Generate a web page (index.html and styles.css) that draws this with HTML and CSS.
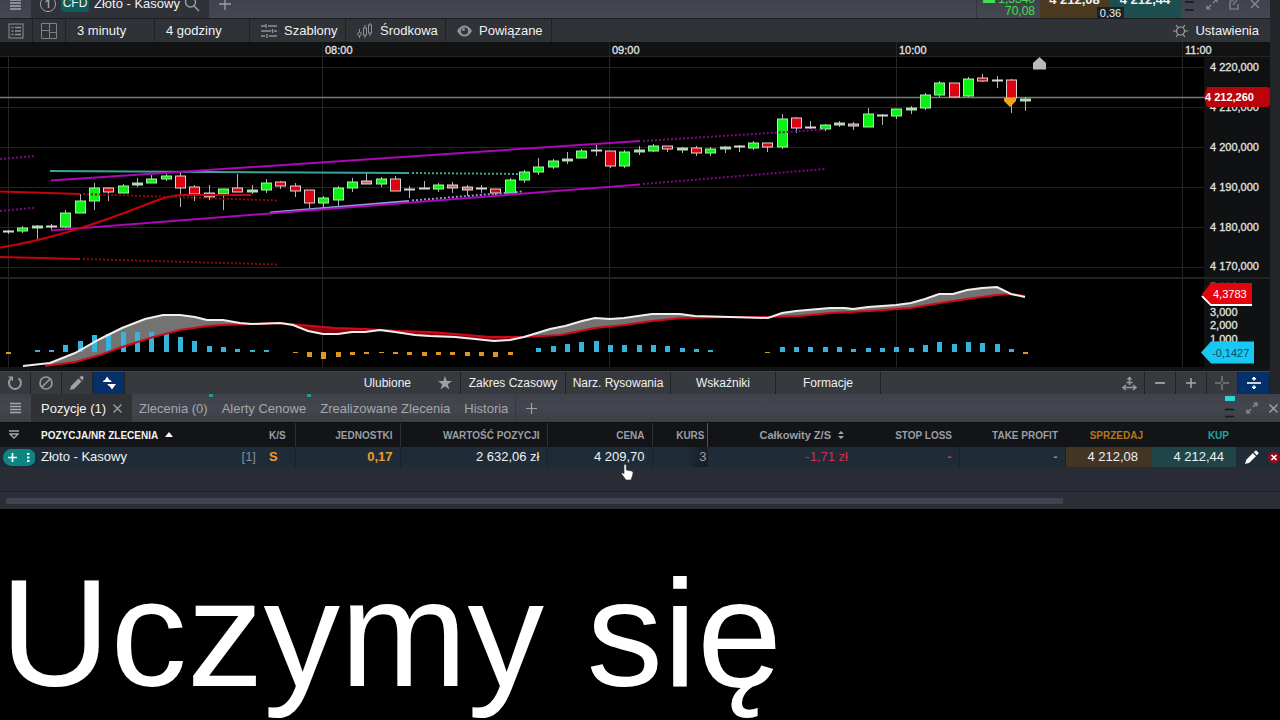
FILE: index.html
```html
<!DOCTYPE html>
<html lang="pl">
<head>
<meta charset="utf-8">
<title>Złoto - Kasowy</title>
<link rel="stylesheet" href="styles.css">
</head>
<body>
<section class="window">
  <div class="titleclip">
    <header class="titlebar">
      <button class="icon-btn menu" aria-label="Menu"><svg width="12" height="12" viewBox="0 0 12 12"><path d="M0 2h11M0 5h11M0 8h11M0 11h11" stroke="#a5a8ac" stroke-width="1.4"/></svg></button>
      <div class="title-tab">
        <svg width="18" height="18" viewBox="0 0 18 18" fill="none" stroke="#9c9fa4"><circle cx="9" cy="9" r="7.6"/><path d="M6.5 7L9.500 4.500V13" stroke-width="1.5"/></svg>
        <span class="cfd">CFD</span>
        <span class="instrument">Złoto - Kasowy</span>
        <button class="plain" aria-label="Szukaj"><svg width="16" height="16" viewBox="0 0 16 16" fill="none" stroke="#9c9fa4" stroke-width="1.4"><circle cx="6.500" cy="6" r="5"/><path d="M10 10l5 5"/></svg></button>
      </div>
      <button class="icon-btn" aria-label="Dodaj"><svg width="12" height="12" viewBox="0 0 12 12"><path d="M6 0v12M0 6h12" stroke="#9c9fa4" stroke-width="1.3"/></svg></button>
      <div class="quote">
        <div class="change"><span>▬ 1,3340</span><span>70,08</span></div>
        <button class="price sell">4 212,08</button>
        <button class="price buy">4 212,44</button>
        <span class="spread">0,36</span>
      </div>
      <div class="win-icons">
        <svg width="10" height="14" viewBox="0 0 10 14"><path d="M0 5h9M0 13h9" stroke="#15171a" stroke-width="1.300"/></svg>
        <button class="plain" aria-label="Powiększ"><svg width="12" height="12" viewBox="0 0 12 12" fill="none" stroke="#8b8e94" stroke-width="1.2"><path d="M7 5l4-4M7.500 1H11v3.500M5 7l-4 4M1 7.500V11h3.500"/></svg></button>
        <button class="plain" aria-label="Odepnij"><svg width="10" height="12" viewBox="0 0 10 12" fill="none" stroke="#8b8e94" stroke-width="1.2"><path d="M5 3H1v8h8V6M4 7l4-5"/></svg></button>
        <button class="plain" aria-label="Zamknij"><svg width="10" height="10" viewBox="0 0 10 10" stroke="#8b8e94" stroke-width="1.3"><path d="M1 1l8 8M9 1L1 9"/></svg></button>
      </div>
    </header>
  </div>
  <nav class="toolbar">
    <button class="sq" aria-label="Lista"><svg width="16" height="16" viewBox="0 0 16 16" fill="none" stroke="#8e9196"><rect x="1" y="1" width="14" height="14"/><path d="M3.500 4.500h2M7 4.500h6M3.500 8h2M7 8h6M3.500 11.500h2M7 11.500h6" stroke-width="1.3"/></svg></button>
    <button class="sq" aria-label="Układ"><svg width="18" height="16" viewBox="0 0 18 16" fill="none" stroke="#7e8186"><path d="M1.500 .5h15v15h-15zM9.500 .5v15M1.500 7.500h8M9.500 9.500h7"/></svg></button>
    <button class="w88">3 minuty</button>
    <button class="w94">4 godziny</button>
    <button class="w97"><svg width="16" height="14" viewBox="0 0 16 14" stroke="#8e9196" stroke-width="1.4"><path d="M0 2h4M7 2h9M0 7h10M13 7h3M0 12h4M8 12h8M5 0v4M11.500 5v4M6 10v4"/></svg>Szablony</button>
    <button class="w100"><svg width="16" height="15" viewBox="0 0 16 15" fill="none" stroke="#8e9196"><circle cx="2.500" cy="11" r="1.800"/><path d="M2.500 6v3M2.500 13v2M8 2v3M8 12v3M13 0v2M13 10v3"/><rect x="6.500" y="5" width="3" height="7"/><rect x="11.500" y="2" width="3" height="8"/></svg>Środkowa</button>
    <button class="w106"><svg width="15" height="12" viewBox="0 0 15 12"><path d="M0 6Q3 .5 7.500 .5T15 6Q12 11.500 7.500 11.500T0 6z" fill="#8e9196"/><circle cx="7.500" cy="6" r="3.500" fill="#2f3237"/><circle cx="6.500" cy="4.500" r="1.500" fill="#8e9196"/></svg>Powiązane</button>
    <button class="settings"><svg width="15" height="14" viewBox="0 0 15 14" fill="none" stroke="#a2a5a9" stroke-width="1.2"><circle cx="7.500" cy="7" r="4"/><path d="M0 7h3.500M11.500 7H15M3 1l2 2.500M12 1l-2 2.500M3 13l2-2.500M12 13l-2-2.500"/></svg>Ustawienia</button>
  </nav>
  <svg class="chart" viewBox="0 42 1270 329" role="img" aria-label="Wykres Złoto - Kasowy">
    <rect y="42" width="1270" height="329" fill="#000"/>
    <rect y="42" width="1270" height="15" fill="#111213"/>
    <rect x="1204" y="57" width="66" height="314" fill="#101112"/>
    <rect y="367" width="1270" height="4" fill="#121416"/>
    <path class="grid" d="M0 67.500H1204M0 107.500H1204M0 147.500H1204M0 187.500H1204M0 227.500H1204M0 267.500H1204M8.500 57V367M322.500 42V367M609.500 42V367M896.500 42V367M1182.500 42V367M0 56.500H1270"/>
    <path d="M0 278H1270" stroke="#222" stroke-width="2"/>
    <g class="axis">
      <text x="325" y="54">08:00</text><text x="612" y="54">09:00</text><text x="899" y="54">10:00</text><text x="1185" y="54">11:00</text>
      <text x="1210" y="71">4 220,000</text><text x="1210" y="111">4 210,000</text><text x="1210" y="151">4 200,000</text><text x="1210" y="191">4 190,000</text><text x="1210" y="231">4 180,000</text><text x="1210" y="270">4 170,000</text>
      <text x="1210" y="291">5,000</text><text x="1210" y="316">3,000</text><text x="1210" y="329">2,000</text><text x="1210" y="343">1,000</text>
    </g>
    <path d="M0 97.500H1204" stroke="#77797b" stroke-width="1.500"/>
    <g id="candles"></g>
    <g class="trend">
      <path class="teal" d="M50 171L409 173"/><path class="teal dot" d="M412 173L523 174"/>
      <path class="blue" d="M270 212.500L409 201"/><path class="blue dot" d="M412 200.500L523 191.500"/>
      <path class="violet" d="M51 180.500L640 141M51 230.500L640 184.500"/>
      <path class="violet2 dot" d="M643 141L825 129.500M643 184L825 169M0 159L36 156M0 211L36 207.500"/>
      <path class="red" d="M0 191.500L80 194M0 257L80 259M0 247.500C50 240 100 223 150 203Q170 195 182 195H251"/>
      <path class="red2 dot" d="M83 194L278 200.500M83 259L278 264.500"/>
    </g>
    <path d="M1004 98h12v3l-6 6l-6-6z" fill="#f0a51c"/>
    <path d="M1039.500 57l6.500 6v6.500h-13V63z" fill="#b9b9b9"/>
    <g id="macd"></g>
    <path d="M1204 97l3-10h60q3 0 3 3v14q0 3-3 3h-60z" fill="#b9040c"/>
    <text class="tag" x="1205" y="101">4 212,260</text>
    <path d="M1202 296l9 9h41" fill="none" stroke="#fff" stroke-width="2"/>
    <path d="M1202 294l9-11h41v21h-41z" fill="#e4040c"/>
    <text class="tag light" x="1213" y="298">4,3783</text>
    <path d="M1201 352.500l10-11h43v22h-43z" fill="#17c8f3"/>
    <text class="tag dark" x="1212" y="357">-0,1427</text>
  </svg>
  <nav class="bottombar">
    <button class="sq" aria-label="Odśwież"><svg width="16" height="16" viewBox="0 0 16 16" fill="none" stroke="#96999c" stroke-width="2"><path d="M11.500 3.200A6 6 0 1 1 3.500 4"/><path d="M1 1.500h5v5z" fill="#96999c" stroke="none"/></svg></button>
    <button class="sq" aria-label="Wyczyść"><svg width="16" height="16" viewBox="0 0 16 16" fill="none" stroke="#96999c" stroke-width="1.700"><circle cx="8" cy="8" r="6"/><path d="M4 12l8-8"/></svg></button>
    <button class="sq" aria-label="Rysuj"><svg width="16" height="16" viewBox="0 0 16 16" fill="#a0a3a6"><path d="M1 15l1-4l7.500-7.500l3 3L5 14zM10.500 2.500l1.500-1.500q1-.5 2 .5t.5 2L13.500 5.500z"/></svg></button>
    <button class="sq active" aria-label="Zmień kolejność"><svg width="16" height="16" viewBox="0 0 16 16" fill="#fff"><path d="M2 7q0-2 2-2l2-3.500L8.500 5q2 0 2 2zM6.500 9H15l-1.500 2l-2.500 3.500L8.500 11q-2 0-2-2z"/></svg></button>
    <button class="fav"><span>Ulubione</span><svg width="14" height="14" viewBox="0 0 14 14" fill="#9fa2a5"><path d="M7 0l1.700 5H14L9.800 8.200L11.400 13.500L7 10.200L2.600 13.500L4.200 8.200L0 5h5.300z"/></svg></button>
    <button class="w105">Zakres Czasowy</button>
    <button class="w105">Narz. Rysowania</button>
    <button class="w105">Wskaźniki</button>
    <button class="w105">Formacje</button>
    <button class="sq push" aria-label="Dopasuj"><svg width="15" height="15" viewBox="0 0 15 15" fill="none" stroke="#96999c" stroke-width="1.500"><path d="M7.500 2v7M4.500 6.500h6M1 11.500h13M4 9l-3 2.500l3 2.500M11 9l3 2.500l-3 2.500M5.500 3.500l2-2l2 2"/></svg></button>
    <button class="sq" aria-label="Pomniejsz"><svg width="12" height="12" viewBox="0 0 12 12" stroke="#a5a8aa" stroke-width="1.700"><path d="M1 6h10"/></svg></button>
    <button class="sq" aria-label="Powiększ"><svg width="12" height="12" viewBox="0 0 12 12" stroke="#a5a8aa" stroke-width="1.500"><path d="M1 6h10M6 1v10"/></svg></button>
    <button class="sq" aria-label="Celownik"><svg width="14" height="14" viewBox="0 0 14 14" stroke="#96999c"><path d="M0 7h6M8 7h6M7 0v6M7 8v6"/></svg></button>
    <button class="sq active" aria-label="Skala"><svg width="14" height="14" viewBox="0 0 14 14" fill="#fff" stroke="#fff"><path d="M0 7h14" stroke-width="1.600"/><path d="M7 1v4M7 9v4"/><path d="M5 3l2-2l2 2zM5 11l2 2l2-2z"/></svg></button>
  </nav>
</section>

<section class="positions">
  <nav class="tabs">
    <button class="icon-btn" aria-label="Menu"><svg width="12" height="12" viewBox="0 0 12 12"><path d="M0 1.500h11M0 4.500h11M0 7.500h11M0 10.500h11" stroke="#a5a8ac" stroke-width="1.300"/></svg></button>
    <button class="tab on">Pozycje (1)<svg width="9" height="9" viewBox="0 0 9 9" stroke="#a0a3a7" stroke-width="1.200"><path d="M.5 .5l8 8M8.500 .5l-8 8"/></svg></button>
    <button class="tab note">Zlecenia (0)</button>
    <button class="tab note">Alerty Cenowe</button>
    <button class="tab">Zrealizowane Zlecenia</button>
    <button class="tab">Historia</button>
    <button class="icon-btn add" aria-label="Dodaj"><svg width="11" height="11" viewBox="0 0 11 11"><path d="M5.500 0v11M0 5.500h11" stroke="#9c9fa4" stroke-width="1.200"/></svg></button>
    <div class="tab-icons">
      <svg width="10" height="24" viewBox="0 0 10 24"><path d="M0 0h10v5H0z" fill="#2fd3d8"/><path d="M0 13.500h9M0 20.500h9" stroke="#15171a" stroke-width="1.300"/></svg>
      <button class="plain" aria-label="Powiększ"><svg width="12" height="12" viewBox="0 0 12 12" fill="none" stroke="#8f9297" stroke-width="1.200"><path d="M7 5l4-4M7.500 1H11v3.500M5 7l-4 4M1 7.500V11h3.500"/></svg></button>
      <button class="plain" aria-label="Zamknij"><svg width="9" height="9" viewBox="0 0 9 9" stroke="#a0a3a7" stroke-width="1.300"><path d="M.5 .5l8 8M8.500 .5l-8 8"/></svg></button>
    </div>
  </nav>
  <table>
    <colgroup><col class="c35"><col class="c228"><col class="c32"><col class="c105"><col class="c147"><col class="c105"><col class="c55"><col class="c147"><col class="c105"><col class="c106"><col class="c86"><col class="c85"><col class="c44"></colgroup>
    <thead>
      <tr>
        <th class="ctl"><svg width="10" height="10" viewBox="0 0 10 10" fill="none" stroke="#a5a8aa" stroke-width="1.300"><path d="M0 1h10M1 4h8L5 8z"/></svg></th>
        <th class="l white">POZYCJA/NR ZLECENIA<svg class="up" width="8" height="5" viewBox="0 0 8 5"><path d="M4 0l4 5H0z" fill="#fff"/></svg></th>
        <th class="l">K/S</th><th class="line">JEDNOSTKI</th><th class="line">WARTOŚĆ POZYCJI</th><th class="line">CENA</th><th class="line kurs">KURS</th>
        <th class="pin">Całkowity Z/S<svg class="sort" width="6" height="8" viewBox="0 0 6 8"><path d="M3 0l3 3H0zM0 5h6L3 8z" fill="#a5a8aa"/></svg></th>
        <th>STOP LOSS</th><th>TAKE PROFIT</th><th class="orange">SPRZEDAJ</th><th class="aqua">KUP</th><th></th>
      </tr>
    </thead>
    <tbody>
      <tr>
        <td class="ctl"><button class="pill" aria-label="Akcje"><svg width="33" height="17" viewBox="0 0 33 17"><path d="M5 8.500h9M9.500 4v9" stroke="#fff" stroke-width="1.700"/><path d="M24 4h2.500v2H24zM24 7.500h2.500v2H24zM24 11h2.500v2H24z" fill="#fff"/></svg></button></td>
        <td class="l"><div class="name"><span>Złoto - Kasowy</span><span class="count">[1]</span></div></td>
        <td class="l amber line">S</td><td class="amber line">0,17</td><td class="line">2 632,06 zł</td><td class="line">4 209,70</td><td class="line cut">3</td>
        <td class="neg pin">-1,71 zł</td><td class="neg line dash">-</td><td class="pos line dash">-</td><td class="sellcell">4 212,08</td><td class="buycell">4 212,44</td>
        <td class="act"><div class="actions"><button class="plain" aria-label="Edytuj"><svg width="14" height="14" viewBox="0 0 16 16" fill="#fff"><path d="M0 16l1.500-5L9 3.500L12.500 7L5 14.500zM10 2.500l1.500-1.500q1-1 2 0l1.500 1.500q1 1 0 2L13.500 6z"/></svg></button><button class="plain" aria-label="Zamknij pozycję"><svg width="12" height="13" viewBox="0 0 12 13"><circle cx="6" cy="6.500" r="6" fill="#8e0c1c"/><path d="M3.500 4l5 5M8.500 4l-5 5" stroke="#fff" stroke-width="1.700"/></svg></button></div></td>
      </tr>
    </tbody>
  </table>
  <div class="empty"></div>
  <div class="scroll"><div class="thumb"></div></div>
</section>
<p class="caption">Uczymy się</p>
<svg class="cursor" width="13" height="17" viewBox="0 0 13 17"><path d="M3 1q1.300-1.500 2.300 0V6l5.200 1q2 .5 1.500 2.500L11 13l-1 3H5L1 10.500Q0 9 1.500 8.700L3 9.800z" fill="#fff" stroke="#26303a" stroke-width=".6"/></svg>
<script src="chart.js"></script>
</body>
</html>
```
FILE: styles.css
```css
* { box-sizing: border-box; }
body { margin: 0; background: #000; color: #f0f1f2; font: 13px "Liberation Sans", Arial, sans-serif; overflow: hidden; }
button { font: inherit; color: inherit; background: none; border: 0; margin: 0; padding: 0; display: flex; align-items: center; flex: none; white-space: nowrap; }
svg { display: block; flex: none; }

.window { border-right: 10px solid #23252a; background: #2e3136; }
.titleclip { height: 19px; overflow: hidden; display: flex; align-items: flex-end; background: #41444d; border-bottom: 1px solid #1b1d20; }
.titlebar { flex: 1; height: 29px; display: flex; align-items: stretch; background: linear-gradient(#3c3f48, #454852); }
.icon-btn { width: 31px; justify-content: center; }
.title-tab { width: 178px; display: flex; align-items: center; padding-left: 8px; background: #2f3238; }
.cfd { margin: 0 5px 0 4px; width: 28px; line-height: 17px; border-radius: 4px; background: #0d5d5b; text-align: center; font-size: 12px; }
.instrument { flex: 1; }
.title-tab .plain { margin-right: 9px; }
.quote { position: relative; margin-left: auto; display: flex; border-left: 1px solid #34363c; }
.change { width: 63px; display: flex; flex-direction: column; justify-content: flex-end; text-align: right; color: #3fe04c; font-size: 12px; line-height: 12px; padding: 0 5px 1px 0; }
.price { font-weight: 700; justify-content: center; align-items: flex-start; padding-top: 3px; line-height: 16px; }
.sell { width: 69px; background: #4c3a20; }
.buy { width: 72px; background: #1d4e50; }
.spread { position: absolute; right: 57px; bottom: -1px; width: 27px; line-height: 12px; background: #1b2024; text-align: center; font-size: 11px; }
.win-icons { width: 89px; display: flex; align-items: center; gap: 11px; padding-left: 4px; }

.toolbar { height: 23px; display: flex; background: #2f3237; }
.toolbar button { border-right: 1px solid #1f2124; padding-left: 11px; gap: 7px; }
.toolbar .sq { width: 33px; padding: 0; justify-content: center; }
.toolbar .w88 { width: 89px; }
.w94 { width: 95px; }
.w97 { width: 96px; }
.w100 { width: 100px; }
.w106 { width: 106px; }
.toolbar .settings { margin-left: auto; border: 0; padding: 0 11px 0 0; }

.chart { width: 100%; height: auto; }
.grid { stroke: #242424; fill: none; }
.axis, .tag { font: 11px "Liberation Sans", Arial, sans-serif; fill: #e2e2e2; stroke: #e2e2e2; stroke-width: .3px; }
.tag { font-weight: 700; fill: #fff; stroke: none; }
.light { font-weight: 400; }
.dark { font-weight: 400; fill: #0d4a60; }
.trend path { fill: none; stroke-width: 2; }
.trend .dot { stroke-dasharray: 2 2; }
.trend .teal { stroke: #3aa596; }
.trend .blue { stroke: #8b9bd8; }
.trend .violet { stroke: #ab08b6; }
.trend .violet2 { stroke: #7d0887; }
.trend .red { stroke: #c4040b; }
.trend .red2 { stroke: #93070b; }
.wick { stroke: #b4b4b4; }
.body { stroke: #d8d8d8; stroke-width: 1px; }
.g { fill: #0bf015; stroke: #a4f3a6; }
.r { fill: #dc0410; }
.p { fill: #b2dcb2; stroke: #b2dcb2; }
.q { fill: #c96a6c; }
.w { fill: #e4e4e4; }
.up-bar { fill: #35b5de; }
.down-bar { fill: #dc9622; }
.gap-up { fill: #737373; }
.gap-down { fill: #87040f; }
.signal { fill: none; stroke: #cf0a1c; stroke-width: 2; }
.line-macd { fill: none; stroke: #f0f0f0; stroke-width: 2; }

.bottombar { height: 23px; display: flex; background: #363a3e; border-top: 1px solid #43474a; font-size: 12px; }
.bottombar button { border-right: 1px solid #1f2225; justify-content: center; }
.bottombar .sq { width: 31px; }
.bottombar .sq.active { width: 32px; background: #05306a; }
.bottombar .fav { width: 336px; justify-content: flex-end; gap: 27px; padding-right: 8px; }
.w105 { width: 105px; }
.bottombar .push { margin-left: auto; }

.tabs { height: 29px; display: flex; background: linear-gradient(#3f424b, #43464f 50%, #3c4044); color: #a4a7ab; border-bottom: 1px solid #0d0e10; }
.tab { position: relative; padding: 0 7px; }
.tab.on { width: 101px; padding: 0 10px; justify-content: space-between; background: #303236; color: #f4f4f4; }
.note::after { content: ""; position: absolute; top: 0; right: 2px; width: 4px; height: 3px; background: #1d9a92; }
.add { border-left: 1px solid #34373c; }
.tab-icons { margin-left: auto; display: flex; align-items: center; gap: 11px; padding-right: 2px; }

table { width: 100%; table-layout: fixed; border-collapse: collapse; }
.c35 { width: 35px; } .c228 { width: 228px; } .c32 { width: 32px; } .c105 { width: 105px; } .c147 { width: 147px; } .c55 { width: 55px; } .c106 { width: 106px; } .c86 { width: 86px; } .c85 { width: 85px; } .c44 { width: 44px; }
th { height: 24px; padding: 0 7px; background: #121417; color: #9b9ea2; font-size: 10px; text-align: right; white-space: nowrap; overflow: hidden; }
td { height: 20px; padding: 0 7px; background: #1f2c38; text-align: right; white-space: nowrap; overflow: hidden; line-height: 18px; }
th.l, td.l { text-align: left; padding-left: 6px; }
th.ctl, td.ctl { padding: 0 0 0 3px; overflow: visible; }
th.ctl { padding-left: 9px; }
.up, .sort { display: inline-block; margin-left: 7px; }
.up { margin-bottom: 2px; }
th.line { border-left: 1px solid #2c2f33; }
td.line { border-right: 1px solid #17212a; }
th.kurs { padding: 0 2px 0 0; }
td.cut { padding: 0; color: #9aa0a6; background: linear-gradient(90deg, #1f2c38 60%, #161c23); }
th.pin { border-left: 1px solid #53575c; padding-right: 10px; font-size: 11px; }
td.pin { border-left: 1px solid #53575c; padding-right: 6px; }
th.white { color: #f2f2f2; }
th.orange { color: #b4781e; padding-right: 8px; }
th.aqua { color: #25a59f; }
.name { display: flex; justify-content: space-between; }
.count { color: #858b92; }
td.amber { color: #ed9c2c; font-weight: 700; }
td.neg { color: #d32f49; }
td.pos { color: #45b85b; }
td.dash { font-weight: 700; }
td.sellcell { background: #433524; padding-right: 13px; }
td.buycell { background: #1f4548; padding-right: 12px; }
td.act { padding: 0; }
.actions { display: flex; justify-content: space-between; align-items: center; padding-left: 9px; }
.pill { width: 33px; height: 17px; border-radius: 9px; background: #0d8584; }
.empty { height: 24px; background: #2a2c35; }
.scroll { height: 18px; padding: 6px 0 0 6px; background: #2b2e36; border-top: 1px solid #1d1f26; }
.thumb { width: 83%; height: 6px; background: #3f444e; }

.caption { margin: 34px 0 0; font-size: 153px; line-height: 180px; color: #fff; white-space: nowrap; }
.cursor { position: absolute; left: 621px; top: 464px; }
```
FILE: chart.js
```js
// Each candle: kind, high, low, body top, body bottom
const candles = [
  "w 230 234 231 232", "g 226 233 228 231", "p 225 240 226 228", "w 224 230 226 227", "g 210 228 213 227",
  "g 194 213 201 213", "g 183 210 188 201", "r 187 201 188 192", "g 184 193 186 193", "p 178 187 183 185",
  "g 175 183 179 183", "g 174 181 176 179", "r 172 207 176 188", "r 185 201 187 194", "q 185 200 193 197",
  "g 189 210 189 194", "r 174 192 188 192", "p 185 194 190 192", "g 179 193 183 190", "r 181 189 182 186",
  "r 183 197 186 191", "r 190 208 190 203", "g 196 208 198 203", "g 186 206 188 200", "g 178 192 182 188",
  "q 173 184 181 184", "g 177 187 179 184", "r 176 191 179 191", "w 186 198 189 190", "w 181 189 188 189",
  "g 183 192 185 189", "q 182 193 185 188", "q 185 196 187 190", "w 185 193 188 189", "r 189 195 189 193",
  "g 178 193 180 193", "g 170 183 172 180", "g 158 175 167 172", "g 159 169 161 167", "p 152 164 159 161",
  "g 149 158 151 158", "w 145 156 150 151", "r 151 168 151 166", "g 150 168 152 166", "p 146 155 150 152",
  "g 144 152 146 151", "r 146 152 146 149", "p 147 153 148 150", "r 146 156 148 153", "g 147 156 149 153",
  "p 146 153 147 149", "w 145 152 146 147", "g 141 150 143 148", "r 143 152 143 147", "g 114 149 119 147",
  "r 117 133 118 128", "w 121 129 127 128", "g 124 131 125 129", "p 121 127 123 125", "q 122 130 124 126",
  "g 108 127 114 127", "w 114 125 115 116", "g 109 119 109 116", "p 106 114 108 110", "g 93 110 95 108",
  "g 81 97 83 95", "r 83 97 83 97", "g 77 97 79 96", "r 74 82 78 81", "w 76 88 80 81",
  "r 79 113 80 98", "p 97 111 99 101"
];

// Signed histogram heights; "." leaves a slot empty
const bars = "-2 . 1 1 6 10 16 17 19 19 19 17 14 10 5 4 2 1 1 . -1 -5 -7 -5 -3 -2 -1 -2 -3 -4 -3 -3 -4 -4 -5 -3 . 3 5 7 9 10 6 6 6 6 5 3 2 1 . . . -1 4 4 4 4 4 2 3 3 4 3 6 9 7 9 8 7 2 -2".split(" ");

const macd = [[23,366],[50,363],[75,353],[100,339],[122,328],[145,319],[163,315],[180,315],[195,317],[207,320],[223,320],[240,323],[252,324],[280,323],[293,325],[308,331],[323,334],[338,334],[352,332],[365,332],[380,330],[395,332],[415,335],[430,336],[455,337],[475,339],[494,341],[510,340],[524,337],[550,329],[565,326],[582,321],[595,318],[610,319],[624,318],[652,314],[680,314],[695,316],[730,317],[768,318],[782,313],[796,311],[830,308],[845,308],[853,309],[868,307],[896,305],[911,303],[925,299],[939,294],[953,294],[967,290],[982,288],[997,287],[1011,294],[1025,297]];
const signal = [[45,366],[75,362],[100,355],[122,347],[150,338],[180,330],[207,326],[223,325],[252,324],[280,323],[300,325],[335,328],[365,329],[400,331],[430,332],[455,334],[490,337],[524,337],[560,335],[595,328],[624,325],[652,321],[682,318],[730,317],[768,317],[800,316],[830,313],[870,311],[911,308],[940,303],[967,299],[997,295],[1011,294],[1025,296]];

const slotX = i => Math.round(8 + i * 14.33);

document.getElementById("candles").innerHTML = candles.map((row, i) => {
  const [kind, high, low, top, bottom] = row.split(" ");
  const x = slotX(i) + 0.5;
  return `<path class="wick" d="M${x} ${high}V${low}"/><rect class="body ${kind}" x="${x - 5}" y="${top}" width="10" height="${bottom - top}"/>`;
}).join("");

const between = (from, to) => {
  const inside = p => p[0] >= from && p[0] <= to;
  return macd.filter(inside).concat(signal.filter(inside).reverse()).join(" ");
};
const barRects = bars.map((v, i) => {
  if (v === ".") return "";
  const h = Math.max(Math.abs(v), 1);
  return v > 0
    ? `<rect class="up-bar" x="${slotX(i) - 2}" y="${351 - h}" width="5" height="${h + 1}"/>`
    : `<rect class="down-bar" x="${slotX(i) - 2}" y="352" width="5" height="${h}"/>`;
}).join("");

document.getElementById("macd").innerHTML =
  `<polygon class="gap-up" points="${between(45, 252)}"/>` +
  `<polygon class="gap-down" points="${between(280, 524)}"/>` +
  `<polygon class="gap-up" points="${between(524, 730)}"/>` +
  `<polygon class="gap-up" points="${between(768, 1011)}"/>` +
  barRects +
  `<polyline class="signal" points="${signal.join(" ")}"/>` +
  `<polyline class="line-macd" points="${macd.join(" ")}"/>`;
```
